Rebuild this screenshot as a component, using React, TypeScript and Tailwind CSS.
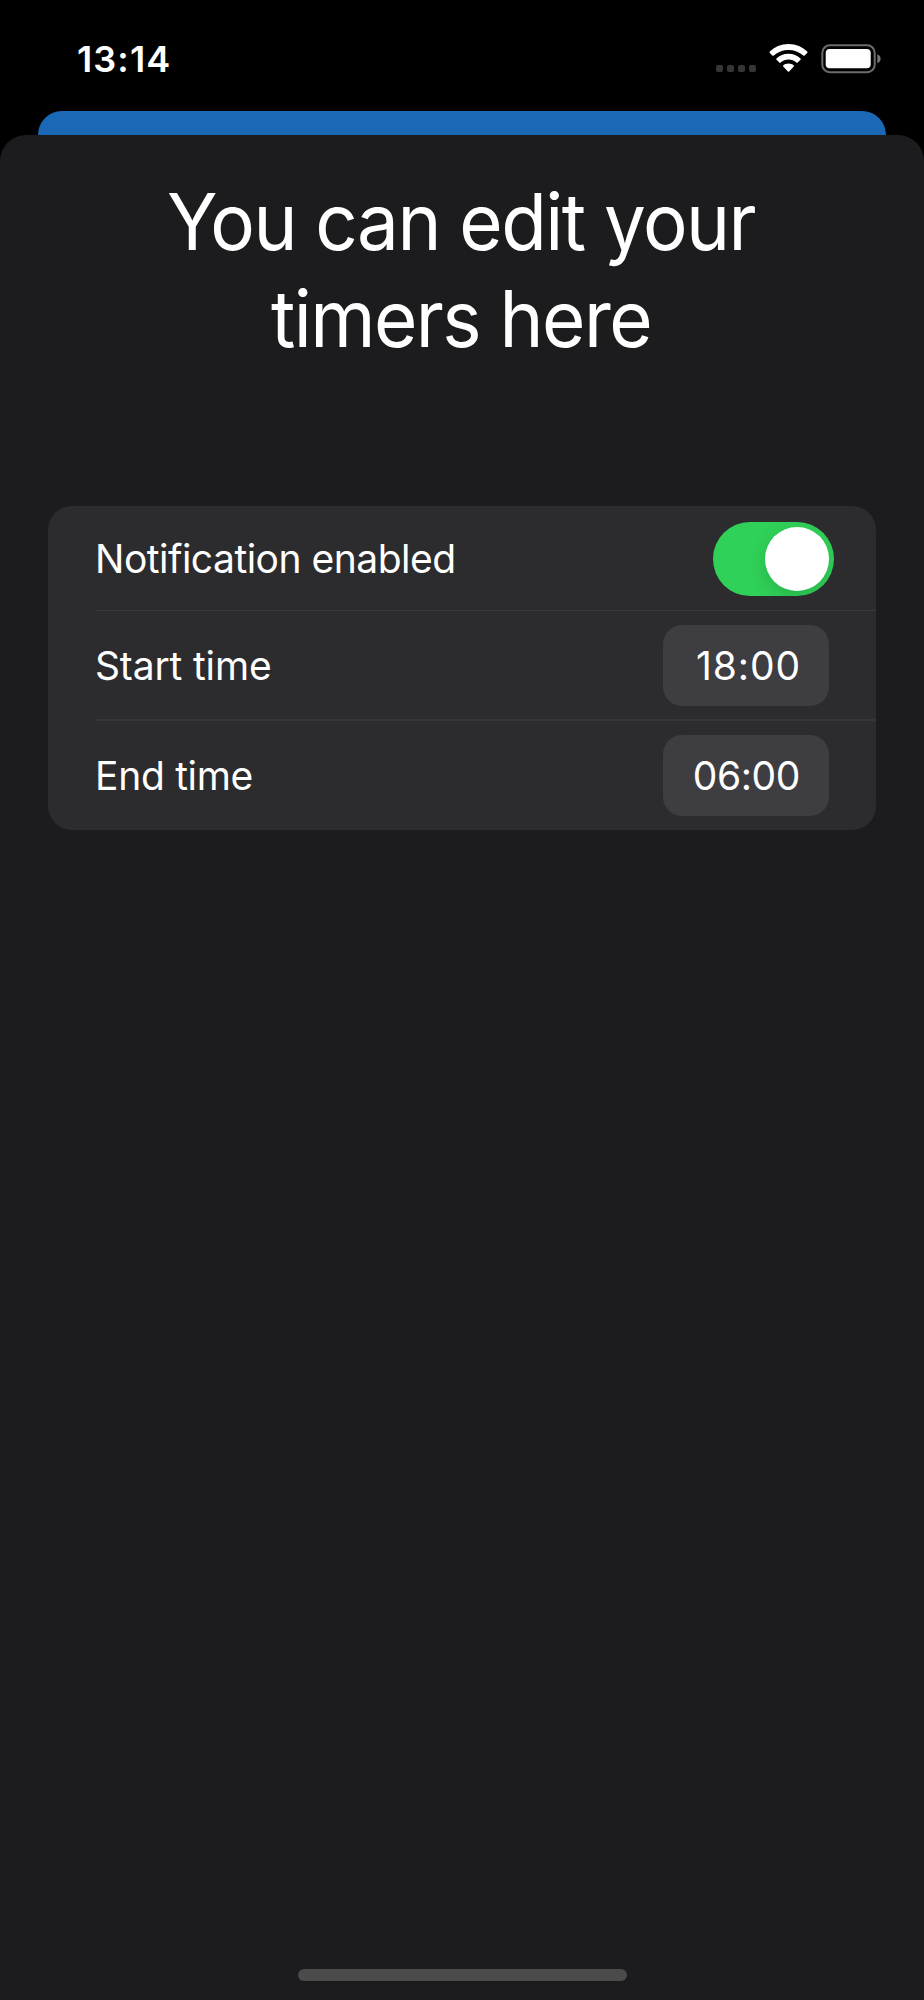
import React from 'react';

interface RowProps {
  label: string;
  className?: string;
  children: React.ReactNode;
}

interface TimeButtonProps {
  time: string;
  className?: string;
}

const StatusBar: React.FC = () => {
  return (
    <div className="flex h-[111px] items-start justify-between pl-[77px] pr-[43px]">
      <span className="mt-[37px] text-[36px] font-semibold leading-[44px] tracking-[1.1px]">13:14</span>
      <div className="mt-[44px] flex items-start">
        <div className="mt-[21px] mr-[13px] flex gap-1">
          <span className="h-[7px] w-[7px] rounded-[2px] bg-[#363636]" />
          <span className="h-[7px] w-[7px] rounded-[2px] bg-[#363636]" />
          <span className="h-[7px] w-[7px] rounded-[2px] bg-[#363636]" />
          <span className="h-[7px] w-[7px] rounded-[2px] bg-[#363636]" />
        </div>
        <svg className="mr-[13px] h-7 w-[39px]" viewBox="0 0 39 28" fill="#fff">
          <path d="M19.5 0C27 0 33.700 2.900 38.200 7.600Q38.900 8.300 38.200 9L35.600 11.600Q35 12.200 34.300 11.600C30.300 7.900 25.200 6 19.500 6S8.700 7.900 4.700 11.600Q4 12.200 3.400 11.600L.8 9Q.1 8.300.8 7.600C5.300 2.900 12 0 19.500 0Z" />
          <path d="M19.500 9.700C24.200 9.700 28.400 11.500 31.500 14.500Q32.100 15.200 31.500 15.800L28.700 18.600Q28.100 19.200 27.400 18.600C25.200 16.700 22.500 15.600 19.500 15.600S13.800 16.700 11.600 18.600Q10.900 19.200 10.300 18.600L7.500 15.800Q6.900 15.200 7.500 14.500C10.600 11.500 14.800 9.700 19.500 9.700Z" />
          <path d="M19.500 19.500C21.500 19.500 23.400 20.200 24.800 21.400Q25.400 22 24.800 22.600L20.100 27.400Q19.500 28 18.900 27.400L14.200 22.600Q13.600 22 14.200 21.400C15.600 20.200 17.500 19.500 19.500 19.500Z" />
        </svg>
        <svg className="h-[30px] w-[60px]" viewBox="0 0 60 30">
          <rect x="1.300" y="1.300" width="52.400" height="26.900" rx="7.500" fill="none" stroke="#6b6b6b" strokeWidth="2" />
          <rect x="4.700" y="5" width="45" height="19.300" rx="4" fill="#fff" />
          <path d="M56.300 10.200C58.400 11 59.600 12.700 59.600 14.700S58.400 18.400 56.300 19.200Z" fill="#757575" />
        </svg>
      </div>
    </div>
  );
};

const Row: React.FC<RowProps> = ({ label, className = '', children }) => {
  return (
    <div className={`ml-[47px] flex items-center justify-between ${className}`}>
      <span className="text-[39px] leading-[48px]">{label}</span>
      {children}
    </div>
  );
};

const Toggle: React.FC = () => {
  return (
    <button
      role="switch"
      aria-checked="true"
      aria-label="Notification enabled"
      className="mr-[42px] flex h-[74px] w-[121px] items-center justify-end overflow-hidden rounded-full bg-[#30d158] pr-[5px]"
    >
      <span className="h-16 w-16 rounded-full bg-white shadow-[0_6px_18px_rgba(0,0,0,0.15)]" />
    </button>
  );
};

const TimeButton: React.FC<TimeButtonProps> = ({ time, className = '' }) => {
  return (
    <button className="mr-[47px] flex h-[81px] w-[166px] items-center justify-end rounded-[19px] bg-[#3e3d42] pr-7">
      <span className={`text-[39px] leading-[48px] ${className}`}>{time}</span>
    </button>
  );
};

const App: React.FC = () => {
  return (
    <div className="flex h-[2000px] w-[924px] flex-col overflow-hidden bg-black font-[Inter,sans-serif] text-white">
      <StatusBar />
      <div className="mx-[38px] h-6 rounded-t-[24px] bg-[#1b68b6]" />
      <main className="flex flex-1 flex-col rounded-t-[26px] bg-[#1c1c1e]">
        <h1 className="mt-[38px] scale-x-[0.955] pr-0.5 text-center text-[78px] font-normal leading-[97px] tracking-[-1.6px]">
          You can edit your
          <br />
          timers here
        </h1>
        <section className="mt-[139px] ml-[48px] w-[828px] overflow-hidden rounded-[24px] bg-[#2c2c2e]">
          <Row label="Notification enabled" className="h-[104px] pt-0.5 tracking-[-0.5px]">
            <Toggle />
          </Row>
          <Row label="Start time" className="h-[109px] border-t border-[#39393b] pt-px tracking-[-0.15px]">
            <TimeButton time="18:00" className="tracking-[0.9px]" />
          </Row>
          <Row label="End time" className="h-[111px] border-t-2 border-[#363638] tracking-[-0.3px]">
            <TimeButton time="06:00" className="pr-px tracking-[-0.4px]" />
          </Row>
        </section>
        <div className="mx-auto mt-auto mb-[19px] h-3 w-[329px] rounded-full bg-[#4b4b4b]" />
      </main>
    </div>
  );
};

export default App;
